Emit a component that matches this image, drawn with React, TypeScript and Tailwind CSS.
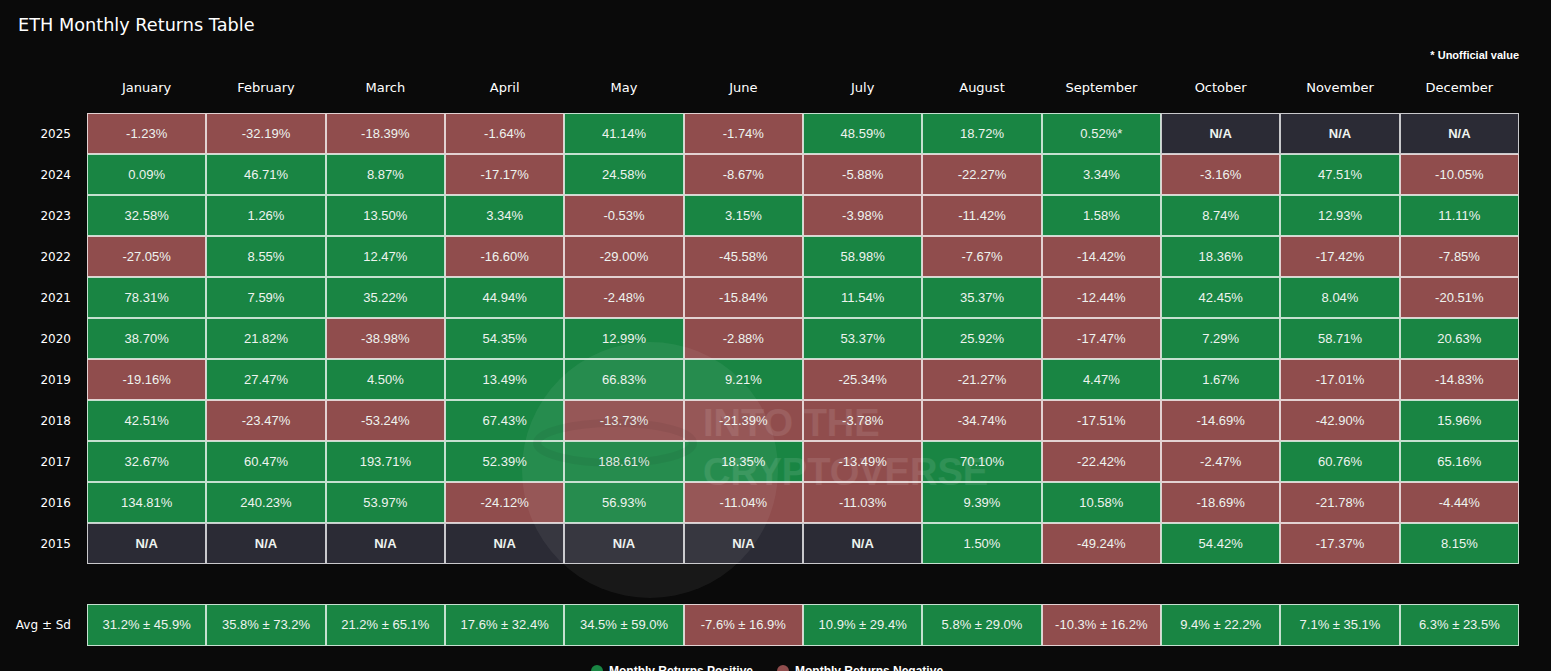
import React from "react";

const months = ["January","February","March","April","May","June","July","August","September","October","November","December"];

const data: [string, string[]][] = [
  ["2025", ["-1.23%","-32.19%","-18.39%","-1.64%","41.14%","-1.74%","48.59%","18.72%","0.52%*","N/A","N/A","N/A"]],
  ["2024", ["0.09%","46.71%","8.87%","-17.17%","24.58%","-8.67%","-5.88%","-22.27%","3.34%","-3.16%","47.51%","-10.05%"]],
  ["2023", ["32.58%","1.26%","13.50%","3.34%","-0.53%","3.15%","-3.98%","-11.42%","1.58%","8.74%","12.93%","11.11%"]],
  ["2022", ["-27.05%","8.55%","12.47%","-16.60%","-29.00%","-45.58%","58.98%","-7.67%","-14.42%","18.36%","-17.42%","-7.85%"]],
  ["2021", ["78.31%","7.59%","35.22%","44.94%","-2.48%","-15.84%","11.54%","35.37%","-12.44%","42.45%","8.04%","-20.51%"]],
  ["2020", ["38.70%","21.82%","-38.98%","54.35%","12.99%","-2.88%","53.37%","25.92%","-17.47%","7.29%","58.71%","20.63%"]],
  ["2019", ["-19.16%","27.47%","4.50%","13.49%","66.83%","9.21%","-25.34%","-21.27%","4.47%","1.67%","-17.01%","-14.83%"]],
  ["2018", ["42.51%","-23.47%","-53.24%","67.43%","-13.73%","-21.39%","-3.78%","-34.74%","-17.51%","-14.69%","-42.90%","15.96%"]],
  ["2017", ["32.67%","60.47%","193.71%","52.39%","188.61%","18.35%","-13.49%","70.10%","-22.42%","-2.47%","60.76%","65.16%"]],
  ["2016", ["134.81%","240.23%","53.97%","-24.12%","56.93%","-11.04%","-11.03%","9.39%","10.58%","-18.69%","-21.78%","-4.44%"]],
  ["2015", ["N/A","N/A","N/A","N/A","N/A","N/A","N/A","1.50%","-49.24%","54.42%","-17.37%","8.15%"]],
];

const avg = ["31.2% ± 45.9%","35.8% ± 73.2%","21.2% ± 65.1%","17.6% ± 32.4%","34.5% ± 59.0%","-7.6% ± 16.9%","10.9% ± 29.4%","5.8% ± 29.0%","-10.3% ± 16.2%","9.4% ± 22.2%","7.1% ± 35.1%","6.3% ± 23.5%"];

function Cell({ v, h }: { v: string; h: string }) {
  const na = v === "N/A";
  const neg = v.startsWith("-");
  const bg = na ? "bg-[#2b2b35]" : neg ? "bg-[#904d4d]" : "bg-[#198543]";
  return (
    <div
      className={`${bg} ${h} border border-white/75 flex items-center justify-center text-[13px] text-[#eef3ef] ${na ? "font-bold" : ""}`}
      style={{ fontFamily: '"Liberation Sans", Arial, sans-serif' }}
    >
      {v}
    </div>
  );
}

export default function App() {
  const dv = { fontFamily: '"DejaVu Sans", Verdana, sans-serif' };
  return (
    <div className="relative w-[1551px] h-[671px] overflow-hidden bg-[#0a0a0a] text-white">
      <div className="pl-[18px] pt-[14px] text-[17.7px] leading-[22px] text-white" style={dv}>
        ETH Monthly Returns Table
      </div>
      <div className="w-[1519px] flex justify-end mt-[12px] text-[11px] font-bold leading-[14px]" style={{ fontFamily: '"Liberation Sans", Arial, sans-serif' }}>
        * Unofficial value
      </div>
      <div className="w-[1519px] grid grid-cols-[87px_repeat(12,1fr)] mt-[14px]">
        <div className="h-[23px]" />
        {months.map((m) => (
          <div key={m} className="h-[23px] flex items-center justify-center text-[13px]" style={dv}>
            {m}
          </div>
        ))}
      </div>
      <div className="w-[1519px] grid grid-cols-[87px_repeat(12,1fr)] mt-[14px]">
        {data.map(([y, vals]) => (
          <React.Fragment key={y}>
            <div className="h-[41px] flex items-center justify-end pr-[16px] text-[12px]" style={dv}>
              {y}
            </div>
            {vals.map((v, i) => (
              <Cell key={i} v={v} h="h-[41px]" />
            ))}
          </React.Fragment>
        ))}
      </div>
      <div className="w-[1519px] grid grid-cols-[87px_repeat(12,1fr)] mt-[40px]">
        <div className="h-[42px] flex items-center justify-end pr-[16px] text-[12px]" style={dv}>
          Avg ± Sd
        </div>
        {avg.map((v, i) => (
          <Cell key={i} v={v} h="h-[42px]" />
        ))}
      </div>
      <div className="flex justify-start gap-[24px] mt-[16px] pl-[591px] text-[12px] font-bold" style={{ fontFamily: '"Liberation Sans", Arial, sans-serif' }}>
        <div className="flex items-center gap-[6px]">
          <span className="inline-block w-[12px] h-[12px] rounded-full bg-[#198543]" />
          <span>Monthly Returns Positive</span>
        </div>
        <div className="flex items-center gap-[6px]">
          <span className="inline-block w-[12px] h-[12px] rounded-full bg-[#904d4d]" />
          <span>Monthly Returns Negative</span>
        </div>
      </div>

      {/* watermark */}
      <div className="absolute left-[505px] top-[325px] pointer-events-none">
        <svg width="300" height="300" viewBox="0 0 300 300">
          <circle cx="145" cy="145" r="128" fill="white" fillOpacity="0.06" />
          <ellipse cx="110" cy="118" rx="78" ry="20" fill="none" stroke="black" strokeOpacity="0.05" strokeWidth="8" />
        </svg>
      </div>
      <div
        className="absolute left-[703px] top-[399px] pointer-events-none font-bold text-white/10 text-[38px] leading-[49px]"
        style={{ fontFamily: '"Liberation Sans", Arial, sans-serif' }}
      >
        <div>INTO THE</div>
        <div>CRYPTOVERSE</div>
      </div>
    </div>
  );
}
